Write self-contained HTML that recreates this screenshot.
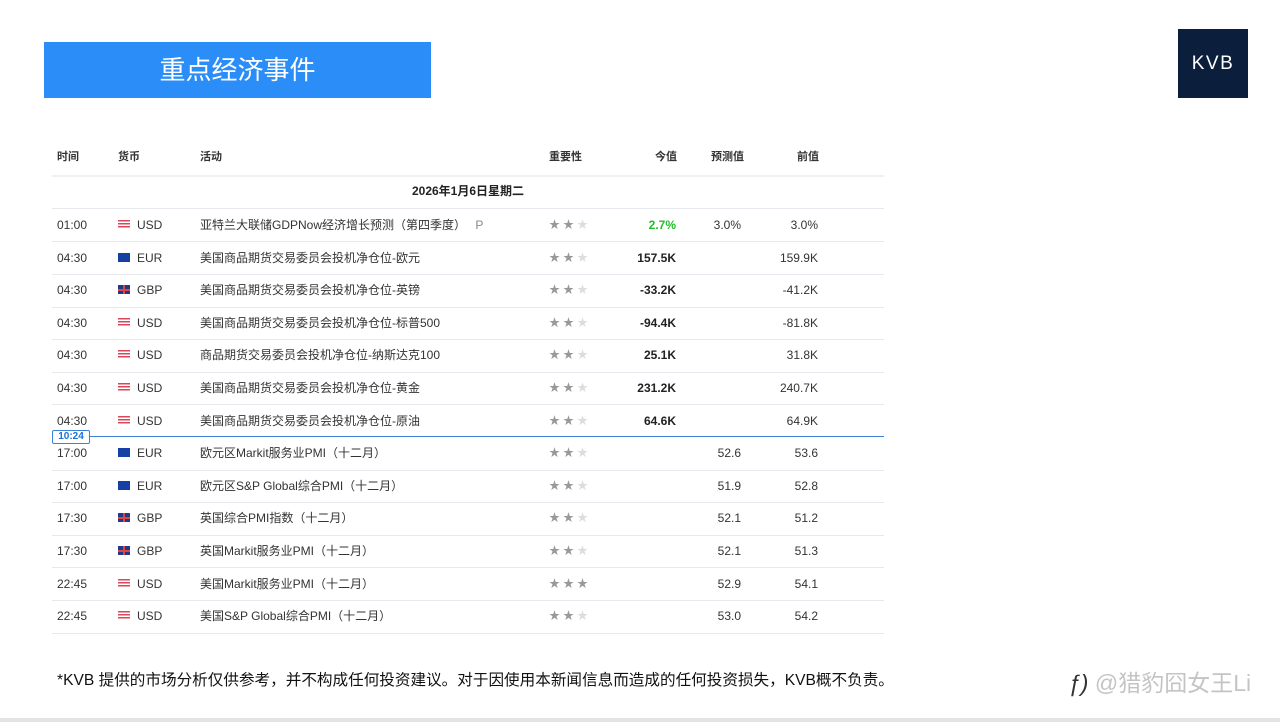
<!DOCTYPE html>
<html><head><meta charset="utf-8"><style>
*{margin:0;padding:0;box-sizing:border-box}
body{width:1280px;height:722px;background:#fff;position:relative;overflow:hidden;font-family:"Liberation Sans","Noto Sans CJK SC",sans-serif;color:#222}
.title{position:absolute;left:44px;top:42px;width:387px;height:56px;background:#2a8df8;color:#fff;font-size:26px;line-height:56px;text-align:center}
.kvb{position:absolute;left:1178px;top:29px;width:70px;height:69px;background:#0b1f3d;color:#fff;font-size:19px;letter-spacing:1.5px;text-align:center;line-height:69px}
.hd{position:absolute;top:148px;font-size:11px;color:#333;font-weight:bold}
.sep{position:absolute;left:52px;width:832px;height:1px;background:#e6e9ee}
.row{position:absolute;left:0;width:1280px;height:20px;font-size:12px;color:#333}
.row>span{position:absolute;top:0;line-height:20px;white-space:nowrap}
.flag{position:absolute;top:5px;width:12px;height:9px}
.us{background:repeating-linear-gradient(#d9475a 0 1.5px,#fff 1.5px 3px)}
.eu{background:#1740a6}
.gb{background:#22398a;background-image:linear-gradient(#d44 0 0),linear-gradient(90deg,#d44 0 0);background-size:12px 2px,2px 9px;background-repeat:no-repeat;background-position:0 3.5px,5px 0}
.stars{color:#999;font-size:11px;letter-spacing:3px}
.stars i{font-style:normal;color:#ddd}
.r{text-align:right}
b{font-weight:bold;color:#222}
em{font-style:normal;color:#1fbf2a;font-weight:bold}
</style></head><body>
<div class="title">重点经济事件</div>
<div class="kvb">KVB</div>
<span class="hd" style="left:57px">时间</span>
<span class="hd" style="left:118px">货币</span>
<span class="hd" style="left:200px">活动</span>
<span class="hd" style="left:549px">重要性</span>
<span class="hd" style="left:655px">今值</span>
<span class="hd" style="left:711px">预测值</span>
<span class="hd" style="left:797px">前值</span>
<div class="sep" style="top:175px;height:2px;background:#f0f1f3"></div>
<div style="position:absolute;left:52px;width:832px;top:182px;text-align:center;font-size:12px;font-weight:bold;color:#222">2026年1月6日星期二</div>
<div class="sep" style="top:208px"></div>
<div id="rows"></div>
<div style="position:absolute;left:52px;top:436px;width:832px;height:1px;background:#3b82d9"></div>
<div style="position:absolute;left:52px;top:430px;width:38px;height:14px;border:1px solid #3b82d9;background:#fff;color:#1d6fd6;font-size:10px;font-weight:bold;text-align:center;line-height:12px;border-radius:2px">10:24</div>
<div style="position:absolute;left:57px;top:668px;font-size:15.6px;color:#111;white-space:nowrap">*KVB 提供的市场分析仅供参考，并不构成任何投资建议。对于因使用本新闻信息而造成的任何投资损失，KVB概不负责。</div>
<div style="position:absolute;left:1068px;top:664px;font-size:23px;color:#c4c4c4;white-space:nowrap;font-weight:normal"><span style="color:#333;font-style:italic">ƒ)</span> @猎豹囧女王Li</div>
<div style="position:absolute;left:0;top:718px;width:1280px;height:4px;background:#e4e4e4"></div>
<script>
var d=[["01:00","us","USD","亚特兰大联储GDPNow经济增长预测（第四季度） <font style='color:#888;margin-left:6px'>P</font>",2,"<em>2.7%</em>","3.0%","3.0%"],
["04:30","eu","EUR","美国商品期货交易委员会投机净仓位-欧元",2,"<b>157.5K</b>","","159.9K"],
["04:30","gb","GBP","美国商品期货交易委员会投机净仓位-英镑",2,"<b>-33.2K</b>","","-41.2K"],
["04:30","us","USD","美国商品期货交易委员会投机净仓位-标普500",2,"<b>-94.4K</b>","","-81.8K"],
["04:30","us","USD","商品期货交易委员会投机净仓位-纳斯达克100",2,"<b>25.1K</b>","","31.8K"],
["04:30","us","USD","美国商品期货交易委员会投机净仓位-黄金",2,"<b>231.2K</b>","","240.7K"],
["04:30","us","USD","美国商品期货交易委员会投机净仓位-原油",2,"<b>64.6K</b>","","64.9K"],
["17:00","eu","EUR","欧元区Markit服务业PMI（十二月）",2,"","52.6","53.6"],
["17:00","eu","EUR","欧元区S&amp;P Global综合PMI（十二月）",2,"","51.9","52.8"],
["17:30","gb","GBP","英国综合PMI指数（十二月）",2,"","52.1","51.2"],
["17:30","gb","GBP","英国Markit服务业PMI（十二月）",2,"","52.1","51.3"],
["22:45","us","USD","美国Markit服务业PMI（十二月）",3,"","52.9","54.1"],
["22:45","us","USD","美国S&amp;P Global综合PMI（十二月）",2,"","53.0","54.2"]];
var h="";
d.forEach(function(r,i){var c=225+i*32.6;var t=c-10;
var st="★★"+(r[4]==3?"★":"<i>★</i>");
h+="<div class='row' style='top:"+t+"px'><span style='left:57px'>"+r[0]+"</span><div class='flag "+r[1]+"' style='left:118px'></div><span style='left:137px'>"+r[2]+"</span><span style='left:200px'>"+r[3]+"</span><span class='stars' style='left:549px'>"+st+"</span><span class='r' style='right:604px'>"+r[5]+"</span><span class='r' style='right:539px'>"+r[6]+"</span><span class='r' style='right:462px'>"+r[7]+"</span></div>";
if(i!=6)h+="<div class='sep' style='top:"+Math.round(c+16.3)+"px'></div>";});
document.getElementById("rows").innerHTML=h;
</script>
</body></html>
